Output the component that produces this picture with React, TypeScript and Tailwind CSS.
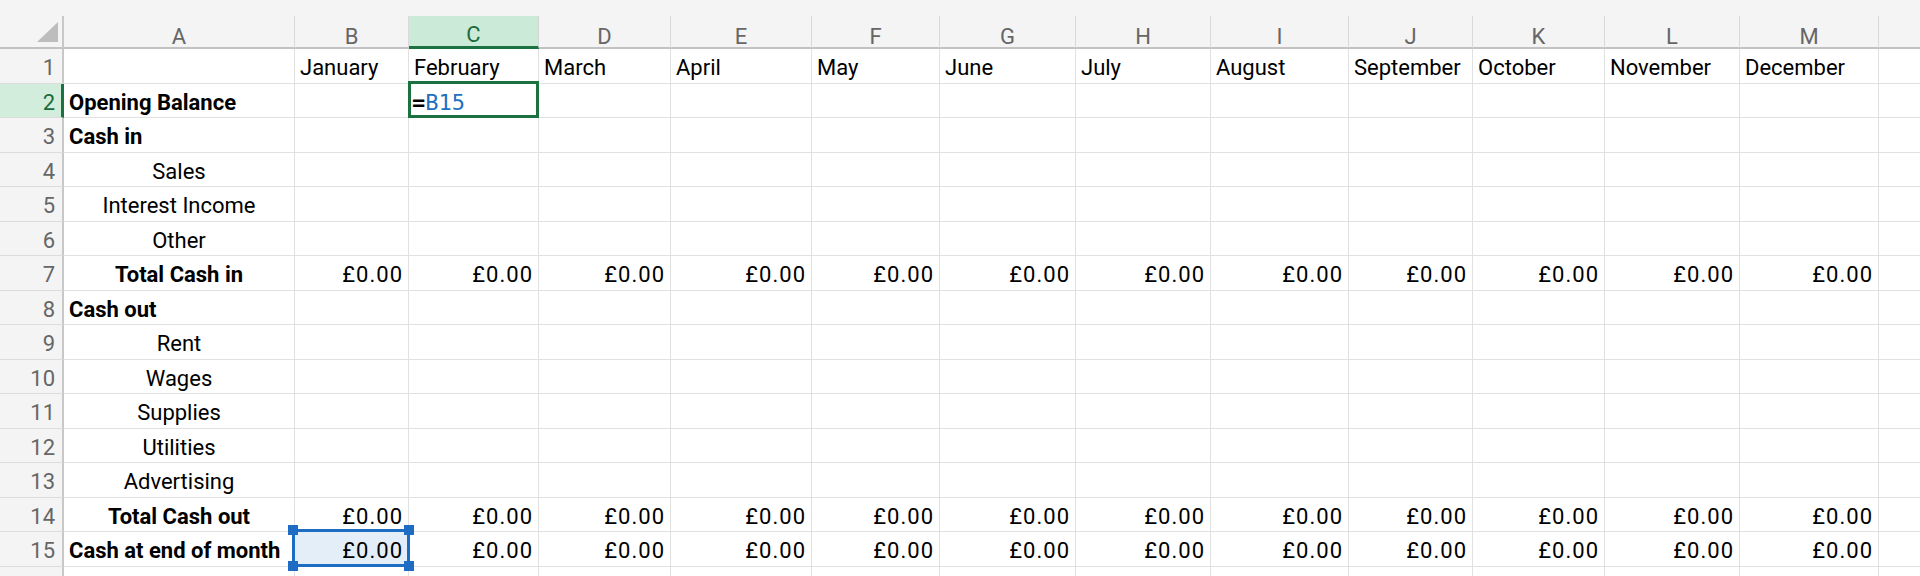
const COLS = ["A", "B", "C", "D", "E", "F", "G", "H", "I", "J", "K", "L", "M"];

const MONTHS = [
  "January",
  "February",
  "March",
  "April",
  "May",
  "June",
  "July",
  "August",
  "September",
  "October",
  "November",
  "December",
];

type Kind = "blank" | "head" | "item" | "total";

type Row = { label: string; kind: Kind; money?: boolean };

const ROWS: Row[] = [
  { label: "", kind: "blank" },
  { label: "Opening Balance", kind: "head" },
  { label: "Cash in", kind: "head" },
  { label: "Sales", kind: "item" },
  { label: "Interest Income", kind: "item" },
  { label: "Other", kind: "item" },
  { label: "Total Cash in", kind: "total", money: true },
  { label: "Cash out", kind: "head" },
  { label: "Rent", kind: "item" },
  { label: "Wages", kind: "item" },
  { label: "Supplies", kind: "item" },
  { label: "Utilities", kind: "item" },
  { label: "Advertising", kind: "item" },
  { label: "Total Cash out", kind: "total", money: true },
  { label: "Cash at end of month", kind: "head", money: true },
];

const cell = "flex items-end pb-[2px] border-r border-b border-[#e1e1e1] overflow-visible whitespace-nowrap";

function ColumnHeader({ letter }: { letter: string }) {
  const active = letter === "C";
  return (
    <div
      className={
        active
          ? "flex items-end justify-center bg-[#cbead7] text-[#1a6b3c] border-r border-[#d4d4d4] border-b-[3px] border-b-[#1c7140]"
          : "flex items-end justify-center bg-[#f4f4f4] text-[#666666] border-r border-[#dadada] border-b-2 border-b-[#c2c2c2]"
      }
    >
      <span className={active ? "translate-y-[1px]" : "translate-y-[2px]"}>{letter}</span>
    </div>
  );
}

function RowNumber({ n }: { n: number }) {
  const active = n === 2;
  return (
    <div
      className={
        active
          ? "flex items-end justify-end pr-[6px] pb-[2px] bg-[#d3eddd] text-[#1a6b3c] border-b border-[#dcdcdc] border-r-[3px] border-r-[#1c7140]"
          : "flex items-end justify-end pr-[7px] pb-[2px] bg-[#f4f4f4] text-[#666666] border-b border-[#dcdcdc] border-r-2 border-r-[#c8c8c8]"
      }
    >
      {n}
    </div>
  );
}

function LabelCell({ row }: { row: Row }) {
  const weight = row.kind === "head" || row.kind === "total" ? "font-bold" : "";
  const align = row.kind === "item" || row.kind === "total" ? "justify-center" : "justify-start pl-[5px]";
  return <div className={`${cell} ${weight} ${align}`}>{row.label}</div>;
}

function Handle({ pos }: { pos: string }) {
  return <div className={`absolute w-[10px] h-[10px] bg-[#1f6cc4] ${pos}`} />;
}

function Money() {
  return <span className="relative tracking-[1px]">£0.00</span>;
}

function MonthCell({ rowNo, row, col }: { rowNo: number; row: Row; col: number }) {
  // row 1 holds the month names
  if (rowNo === 1) {
    return <div className={`${cell} pl-[5px]`}>{MONTHS[col]}</div>;
  }

  // C2 is being edited with a reference to B15
  if (rowNo === 2 && col === 1) {
    return (
      <div className={`${cell} relative pl-[3px]`}>
        <span className="font-['DejaVu_Sans_Mono',monospace] text-[22px] font-bold text-black">=</span>
        <span className="font-['DejaVu_Sans_Mono',monospace] text-[22px] text-[#1f6fc2]">B15</span>
        <div className="absolute -left-px -top-[3px] -right-px -bottom-px border-[3px] border-[#1c7140] pointer-events-none" />
      </div>
    );
  }

  if (!row.money) return <div className={cell} />;

  // B15 highlighted as the referenced range
  if (rowNo === 15 && col === 0) {
    return (
      <div className={`${cell} relative justify-end pr-[5px]`}>
        <div className="absolute -left-[3px] -top-[3px] right-[-2px] -bottom-px bg-[#e4eef9] border-[3px] border-[#1f6cc4]" />
        <Money />
        <Handle pos="-left-[7px] -top-[7px]" />
        <Handle pos="-right-[6px] -top-[7px]" />
        <Handle pos="-left-[7px] -bottom-[5px]" />
        <Handle pos="-right-[6px] -bottom-[5px]" />
      </div>
    );
  }

  return (
    <div className={`${cell} justify-end pr-[5px]`}>
      <Money />
    </div>
  );
}

export default function App() {
  return (
    <div className="w-[1920px] h-[576px] overflow-hidden bg-[#f4f4f4] font-['Roboto',sans-serif] text-[22px] text-black">
      <div className="h-[16px]" />
      <div className="grid grid-cols-[64px_231px_114px_130px_132px_141px_128px_136px_135px_138px_124px_132px_135px_139px_1fr] grid-rows-[33px_repeat(16,34.5px)] bg-white leading-[1.15]">
        {/* corner with the select-all triangle */}
        <div className="relative bg-[#f4f4f4] border-r-2 border-r-[#c8c8c8] border-b-2 border-b-[#c2c2c2]">
          <svg className="absolute left-[37px] top-[6px]" width="21" height="20" viewBox="0 0 21 20">
            <polygon points="21,0 21,20 0,20" fill="#bdbdbd" />
          </svg>
        </div>
        {COLS.map((c) => (
          <ColumnHeader key={c} letter={c} />
        ))}
        <div className="bg-[#f4f4f4] border-b-2 border-b-[#c2c2c2]" />

        {ROWS.map((row, i) => {
          const rowNo = i + 1;
          return [
            <RowNumber key={`n${rowNo}`} n={rowNo} />,
            <LabelCell key={`a${rowNo}`} row={row} />,
            ...MONTHS.map((_, col) => <MonthCell key={`c${rowNo}-${col}`} rowNo={rowNo} row={row} col={col} />),
            <div key={`z${rowNo}`} className="border-b border-[#e1e1e1]" />,
          ];
        })}

        {/* next row, only its top edge shows */}
        <div className="bg-[#f4f4f4] border-r-2 border-r-[#c8c8c8]" />
        {COLS.map((c) => (
          <div key={`r16${c}`} className="border-r border-[#e1e1e1]" />
        ))}
        <div />
      </div>
    </div>
  );
}
